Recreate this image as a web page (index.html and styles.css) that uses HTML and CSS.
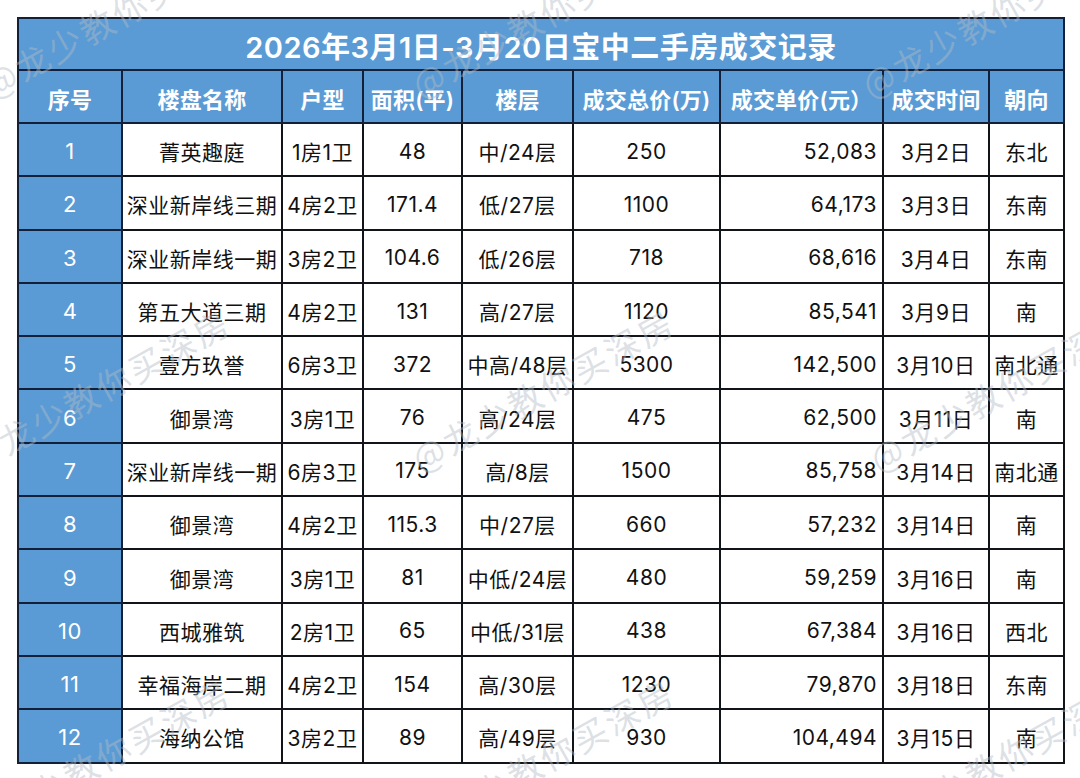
FILE: index.html
```html
<!DOCTYPE html>
<html lang="zh-CN">
<head>
<meta charset="utf-8">
<title>2026年3月1日-3月20日宝中二手房成交记录</title>
<link rel="stylesheet" href="styles.css">
</head>
<body>
<div class="page">
  <table class="deals">
    <colgroup>
      <col class="c-no"><col class="c-name"><col class="c-type"><col class="c-area"><col class="c-floor"><col class="c-total"><col class="c-unit"><col class="c-date"><col class="c-dir">
    </colgroup>
    <thead>
      <tr class="title-row"><th colspan="9" class="title">2026年3月1日-3月20日宝中二手房成交记录</th></tr>
      <tr class="head-row">
        <th>序号</th><th>楼盘名称</th><th>户型</th><th>面积(平)</th><th>楼层</th><th>成交总价(万)</th><th>成交单价(元）</th><th>成交时间</th><th>朝向</th>
      </tr>
    </thead>
    <tbody>
      <tr><th>1</th><td>菁英趣庭</td><td>1房1卫</td><td>48</td><td>中/24层</td><td>250</td><td class="num">52,083</td><td>3月2日</td><td>东北</td></tr>
      <tr><th>2</th><td>深业新岸线三期</td><td>4房2卫</td><td>171.4</td><td>低/27层</td><td>1100</td><td class="num">64,173</td><td>3月3日</td><td>东南</td></tr>
      <tr><th>3</th><td>深业新岸线一期</td><td>3房2卫</td><td>104.6</td><td>低/26层</td><td>718</td><td class="num">68,616</td><td>3月4日</td><td>东南</td></tr>
      <tr><th>4</th><td>第五大道三期</td><td>4房2卫</td><td>131</td><td>高/27层</td><td>1120</td><td class="num">85,541</td><td>3月9日</td><td>南</td></tr>
      <tr><th>5</th><td>壹方玖誉</td><td>6房3卫</td><td>372</td><td>中高/48层</td><td>5300</td><td class="num">142,500</td><td>3月10日</td><td>南北通</td></tr>
      <tr><th>6</th><td>御景湾</td><td>3房1卫</td><td>76</td><td>高/24层</td><td>475</td><td class="num">62,500</td><td>3月11日</td><td>南</td></tr>
      <tr><th>7</th><td>深业新岸线一期</td><td>6房3卫</td><td>175</td><td>高/8层</td><td>1500</td><td class="num">85,758</td><td>3月14日</td><td>南北通</td></tr>
      <tr><th>8</th><td>御景湾</td><td>4房2卫</td><td>115.3</td><td>中/27层</td><td>660</td><td class="num">57,232</td><td>3月14日</td><td>南</td></tr>
      <tr><th>9</th><td>御景湾</td><td>3房1卫</td><td>81</td><td>中低/24层</td><td>480</td><td class="num">59,259</td><td>3月16日</td><td>南</td></tr>
      <tr><th>10</th><td>西城雅筑</td><td>2房1卫</td><td>65</td><td>中低/31层</td><td>438</td><td class="num">67,384</td><td>3月16日</td><td>西北</td></tr>
      <tr><th>11</th><td>幸福海岸二期</td><td>4房2卫</td><td>154</td><td>高/30层</td><td>1230</td><td class="num">79,870</td><td>3月18日</td><td>东南</td></tr>
      <tr><th>12</th><td>海纳公馆</td><td>3房2卫</td><td>89</td><td>高/49层</td><td>930</td><td class="num">104,494</td><td>3月15日</td><td>南</td></tr>
    </tbody>
  </table>
  <div class="watermarks" aria-hidden="true">
    <span class="wm wm1">@龙少教你买深房</span>
    <span class="wm wm2">@龙少教你买深房</span>
    <span class="wm wm3">@龙少教你买深房</span>
    <span class="wm wm4">@龙少教你买深房</span>
    <span class="wm wm5">@龙少教你买深房</span>
    <span class="wm wm6">@龙少教你买深房</span>
    <span class="wm wm7">@龙少教你买深房</span>
    <span class="wm wm8">@龙少教你买深房</span>
    <span class="wm wm9">@龙少教你买深房</span>
  </div>
</div>
</body>
</html>
```

FILE: styles.css
```css
html, body {
  margin: 0;
  padding: 0;
  background: #ffffff;
}

.page {
  position: relative;
  width: 1080px;
  height: 778px;
  overflow: hidden;
  padding: 17px 0 0 17px;
  box-sizing: border-box;
  font-family: Inter, "Noto Sans CJK SC", sans-serif;
}

.deals {
  border-collapse: collapse;
  table-layout: fixed;
  width: 1046px;
  color: #111111;
  font-size: 21px;
}

.c-no { width: 104px; }
.c-name { width: 160px; }
.c-type { width: 81px; }
.c-area { width: 99px; }
.c-floor { width: 111px; }
.c-total { width: 147px; }
.c-unit { width: 163px; }
.c-date { width: 106px; }
.c-dir { width: 75px; }

.deals th,
.deals td {
  border: 2px solid #111418;
  padding: 3px 0 0;
  text-align: center;
  vertical-align: middle;
  white-space: nowrap;
  overflow: hidden;
  letter-spacing: 0.5px;
}

.deals thead th {
  background: #5b9bd5;
  color: #ffffff;
  border-color: #13203a;
  padding: 2px 0 0;
}

.title-row { height: 52px; }
.title {
  font-size: 29px;
  font-weight: 600;
  letter-spacing: 0.3px;
}

.head-row { height: 53px; }
.head-row th {
  font-size: 22px;
  font-weight: 600;
  letter-spacing: 0.2px;
}

.deals tbody tr { height: 53.3px; }

.deals tbody th {
  background: #5b9bd5;
  color: #ffffff;
  font-weight: normal;
  font-size: 22px;
  border-color: #13203a;
}

.deals td.num {
  text-align: right;
  padding-right: 5px;
}

.watermarks {
  position: absolute;
  inset: 0;
  pointer-events: none;
}

.wm {
  position: absolute;
  font-family: "Noto Sans CJK SC", sans-serif;
  font-size: 34px;
  letter-spacing: 3px;
  color: rgba(178, 188, 198, 0.45);
  white-space: nowrap;
  transform-origin: 0 50%;
  transform: rotate(-29deg);
}

.wm1 { left: -14px; top: 62px; }
.wm2 { left: 414px; top: 62px; }
.wm3 { left: 864px; top: 62px; }
.wm4 { left: -30px; top: 436px; }
.wm5 { left: 414px; top: 436px; }
.wm6 { left: 872px; top: 436px; }
.wm7 { left: -30px; top: 806px; }
.wm8 { left: 414px; top: 806px; }
.wm9 { left: 872px; top: 806px; }
```
